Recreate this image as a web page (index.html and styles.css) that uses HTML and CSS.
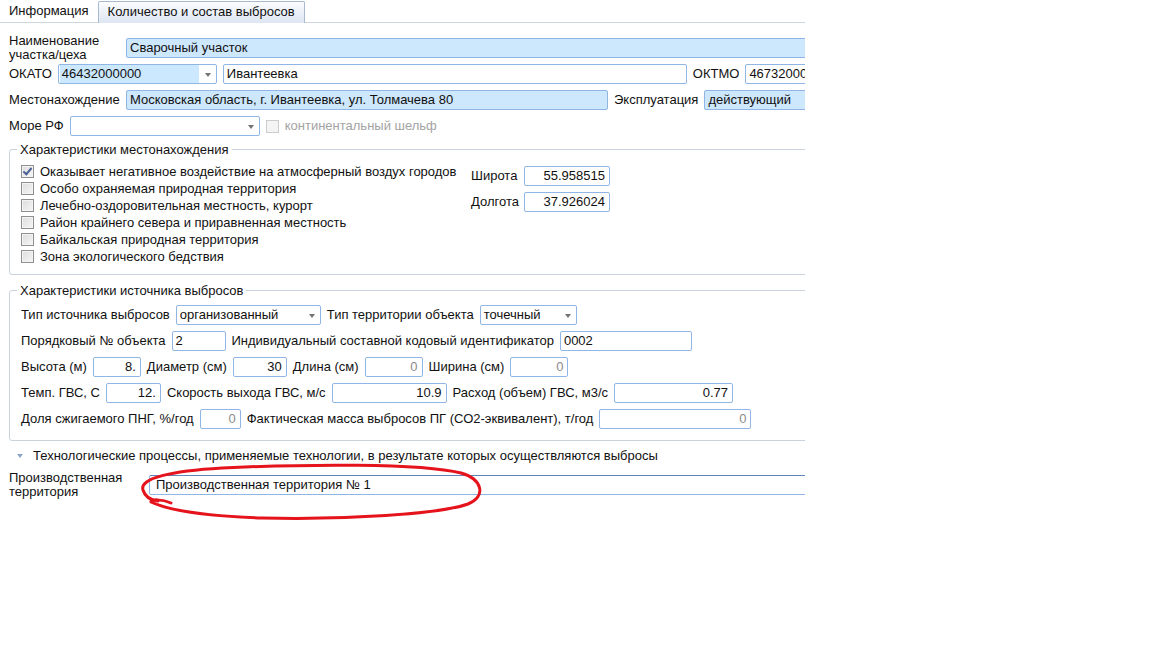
FILE: index.html
```html
<!DOCTYPE html>
<html lang="ru">
  <head>
    <meta charset="UTF-8" />
    <meta name="viewport" content="width=device-width, initial-scale=1.0" />
    <title>Источник выбросов</title>
    <link rel="stylesheet" href="styles.css">
  </head>
  <body>
    <div class="panel">
      <div class="tabs">
        <div class="tab active">Информация</div>
        <div class="tab">Количество и состав выбросов</div>
      </div>

      <div class="form">
        <div class="row tall first">
          <div class="label caption">Наименование<br />участка/цеха</div>
          <div class="field hl grow edge">Сварочный участок</div>
        </div>
        <div class="row close">
          <div class="label">ОКАТО</div>
          <div class="field combo w-okato"><span class="sel">46432000000</span></div>
          <div class="field w-city">Ивантеевка</div>
          <div class="label">ОКТМО</div>
          <div class="field grow edge">46732000000</div>
        </div>
        <div class="row">
          <div class="label caption">Местонахождение</div>
          <div class="field hl w-addr">Московская область, г. Ивантеевка, ул. Толмачева 80</div>
          <div class="label">Эксплуатация</div>
          <div class="field hl combo grow edge">действующий</div>
        </div>
        <div class="row">
          <div class="label">Море РФ</div>
          <div class="field combo w-sea"></div>
          <span class="check disabled"></span>
          <div class="label muted">континентальный шельф</div>
        </div>

        <fieldset class="group">
          <legend>Характеристики местонахождения</legend>
          <div class="group-body">
            <div class="checks">
              <div class="check-row"><span class="check on"></span>Оказывает негативное воздействие на атмосферный воздух городов</div>
              <div class="check-row"><span class="check"></span>Особо охраняемая природная территория</div>
              <div class="check-row"><span class="check"></span>Лечебно-оздоровительная местность, курорт</div>
              <div class="check-row"><span class="check"></span>Район крайнего севера и приравненная местность</div>
              <div class="check-row"><span class="check"></span>Байкальская природная территория</div>
              <div class="check-row"><span class="check"></span>Зона экологического бедствия</div>
            </div>
            <div class="coords">
              <div class="label">Широта</div>
              <div class="field num">55.958515</div>
              <div class="label">Долгота</div>
              <div class="field num">37.926024</div>
            </div>
          </div>
        </fieldset>

        <fieldset class="group second">
          <legend>Характеристики источника выбросов</legend>
          <div class="row flush">
            <div class="label">Тип источника выбросов</div>
            <div class="field combo w-145">организованный</div>
            <div class="label">Тип территории объекта</div>
            <div class="field combo w-97">точечный</div>
          </div>
          <div class="row">
            <div class="label">Порядковый № объекта</div>
            <div class="field w-54">2</div>
            <div class="label">Индивидуальный составной кодовый идентификатор</div>
            <div class="field w-132">0002</div>
          </div>
          <div class="row">
            <div class="label">Высота (м)</div>
            <div class="field num w-48">8.</div>
            <div class="label">Диаметр (см)</div>
            <div class="field num w-54">30</div>
            <div class="label">Длина (см)</div>
            <div class="field num muted w-58">0</div>
            <div class="label">Ширина (см)</div>
            <div class="field num muted w-58">0</div>
          </div>
          <div class="row">
            <div class="label">Темп. ГВС, С</div>
            <div class="field num w-55">12.</div>
            <div class="label">Скорость выхода ГВС, м/с</div>
            <div class="field num w-115">10.9</div>
            <div class="label">Расход (объем) ГВС, м3/с</div>
            <div class="field num w-119">0.77</div>
          </div>
          <div class="row">
            <div class="label">Доля сжигаемого ПНГ, %/год</div>
            <div class="field num muted w-41">0</div>
            <div class="label">Фактическая масса выбросов ПГ (СО2-эквивалент), т/год</div>
            <div class="field num muted w-152">0</div>
          </div>
        </fieldset>

        <div class="expander">
          <span class="arrow"></span>
          Технологические процессы, применяемые технологии, в результате которых осуществляются выбросы
        </div>

        <div class="row tall last">
          <div class="label caption wide">Производственная<br />территория</div>
          <div class="field grow edge dark-top">Производственная территория № 1</div>
        </div>
      </div>
    </div>

    <!-- red hand-drawn mark over the territory field -->
    <svg class="mark" width="1152" height="648" viewBox="0 0 1152 648">
      <path d="M 171 503 C 162 499 150 499 151 502 C 168 510 205 516 262 518 C 345 520 440 514 468 504 C 487 496 482 479 461 473 C 420 463 305 464 222 468 C 172 471 139 478 143 490 C 145 497 150 500 158 501"
        fill="none" stroke="#e5131b" stroke-width="3" stroke-linecap="round" stroke-linejoin="round" />
    </svg>
  </body>
</html>
```

FILE: styles.css
```css
body {
  margin: 0;
  background-color: #ffffff;
  font-family: "Liberation Sans", Arial, sans-serif;
  font-size: 13px;
  color: #111111;
}
.panel {
  width: 805px;
  height: 648px;
  overflow: hidden;
}
.tabs {
  display: flex;
  height: 22px;
  border-bottom: 1px solid #cdd6e0;
}
.tab {
  padding: 0 9px;
  line-height: 22px;
  white-space: nowrap;
}
.tab.active {
  background-color: #ffffff;
}
.tab:not(.active) {
  box-sizing: border-box;
  height: 22px;
  margin-top: 1px;
  line-height: 20px;
  border: 1px solid #a9b9cf;
  border-bottom: none;
  border-radius: 2px 2px 0 0;
  background: linear-gradient(#fbfcfe, #dde6f2);
}
.form {
  padding-left: 9px;
}
.row {
  display: flex;
  align-items: center;
  gap: 6px;
  height: 20px;
  margin-top: 6px;
}
.row.tall {
  height: 28px;
}
.row.first {
  margin-top: 11px;
}
.row.close {
  margin-top: 2px;
}
.row.flush {
  margin-top: 0;
}
.row.last {
  margin-top: 8px;
}
.label {
  white-space: nowrap;
  line-height: 14px;
}
.label.caption {
  width: 111px;
  flex-shrink: 0;
}
.label.caption.wide {
  width: 134px;
}
.label.muted {
  color: #a3a3a3;
}
.field {
  box-sizing: border-box;
  height: 20px;
  flex-shrink: 0;
  padding: 0 3px;
  line-height: 18px;
  border: 1px solid #8fb6e6;
  border-radius: 2px;
  background-color: #ffffff;
  white-space: nowrap;
  overflow: hidden;
}
.field.hl {
  background-color: #cde7fc;
}
.field.num {
  text-align: right;
  padding-right: 4px;
}
.field.muted {
  color: #8c8c8c;
}
.field.grow {
  flex: 1;
  min-width: 0;
}
.field.edge {
  margin-right: -12px;
}
.field.dark-top {
  padding-left: 6px;
  border-top-color: #5f86bb;
}
.field.combo {
  position: relative;
  padding-right: 16px;
}
.field.combo::after {
  content: "";
  position: absolute;
  right: 5px;
  top: 8px;
  border-left: 3.5px solid transparent;
  border-right: 3.5px solid transparent;
  border-top: 4px solid #737373;
}
.field.combo.grow::after {
  display: none;
}
.sel {
  display: block;
  width: 137px;
  margin-left: -2px;
  padding-left: 2px;
  background-color: #cce8ff;
}
.w-okato { width: 159px; }
.w-city { width: 464px; }
.w-addr { width: 482px; }
.w-sea { width: 190px; }
.w-41 { width: 41px; }
.w-48 { width: 48px; }
.w-54 { width: 54px; }
.w-55 { width: 55px; }
.w-58 { width: 58px; }
.w-97 { width: 97px; }
.w-115 { width: 115px; }
.w-119 { width: 119px; }
.w-132 { width: 132px; }
.w-145 { width: 145px; }
.w-152 { width: 152px; }

.check {
  box-sizing: border-box;
  display: inline-block;
  flex-shrink: 0;
  width: 13px;
  height: 13px;
  border: 1px solid #8e8f8f;
  background: linear-gradient(135deg, #dcdcdc, #f6f6f6);
  box-shadow: inset 0 0 0 1px #f4f4f4;
}
.check.disabled {
  border-color: #cccccc;
  background: #f4f4f4;
  box-shadow: none;
}
.check.on {
  position: relative;
}
.check.on::after {
  content: "";
  position: absolute;
  left: 3px;
  top: 0px;
  width: 3px;
  height: 7px;
  border-right: 2px solid #4b5f96;
  border-bottom: 2px solid #4b5f96;
  transform: rotate(40deg);
}
.group {
  margin: 6px -20px 0 0;
  padding: 6px 0 9px 11px;
  border: 1px solid #c9d3de;
  border-radius: 3px;
  min-width: 0;
}
.group.second {
  margin-top: 8px;
  padding-top: 7px;
  padding-bottom: 11px;
}
.group legend {
  margin-left: -4px;
  padding: 0 3px;
  line-height: 15px;
}
.group-body {
  display: flex;
  align-items: flex-start;
}
.checks {
  width: 450px;
}
.check-row {
  display: flex;
  align-items: center;
  gap: 6px;
  height: 17px;
  white-space: nowrap;
}
.coords {
  display: grid;
  grid-template-columns: 47px 86px;
  grid-auto-rows: 20px;
  column-gap: 6px;
  row-gap: 6px;
  align-items: center;
  margin-top: 3px;
}
.expander {
  display: flex;
  align-items: center;
  gap: 10px;
  height: 15px;
  margin-top: 7px;
  padding-left: 8px;
  white-space: nowrap;
}
.arrow {
  border-left: 3.5px solid transparent;
  border-right: 3.5px solid transparent;
  border-top: 4px solid #8ea4c6;
}
.mark {
  position: absolute;
  left: 0;
  top: 0;
  pointer-events: none;
}
```
